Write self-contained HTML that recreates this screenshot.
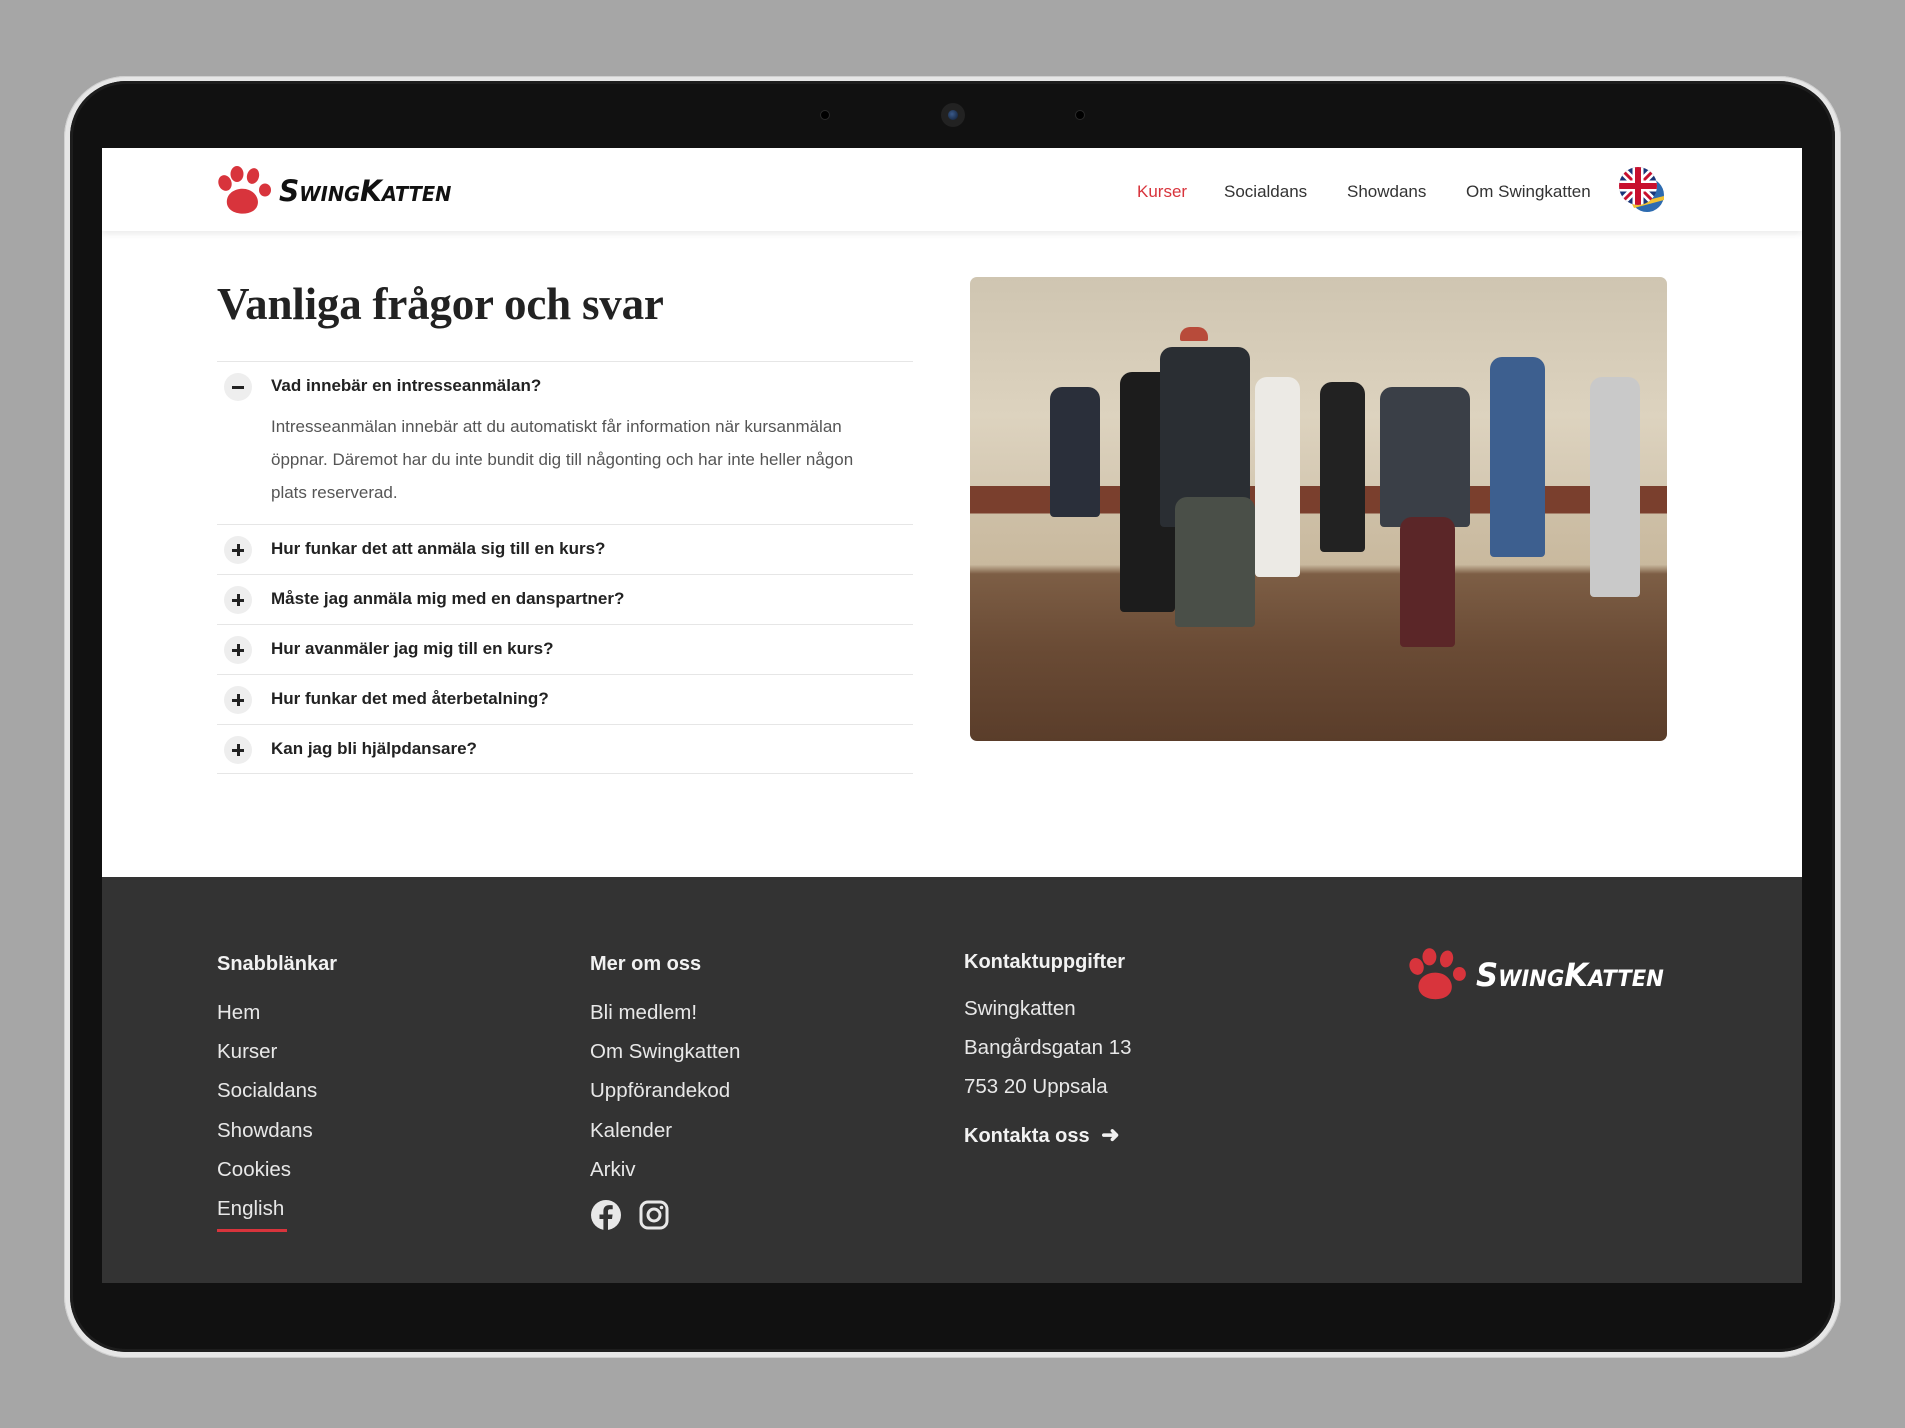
<!DOCTYPE html>
<html><head><meta charset="utf-8">
<style>
*{margin:0;padding:0;box-sizing:border-box}
body{width:1905px;height:1428px;background:#a6a6a6;position:relative;overflow:hidden;font-family:"Liberation Sans",sans-serif}
.outer{position:absolute;left:64px;top:76px;width:1777px;height:1282px;border-radius:62px;background:#e6e6e6;box-shadow:inset 0 0 0 1px #cfcfcf}
.bezel{position:absolute;left:70px;top:81px;width:1765px;height:1271px;border-radius:56px;background:#111;box-shadow:inset 0 0 0 3px #1d1d1d}
.screen{position:absolute;left:102px;top:148px;width:1700px;height:1135px;background:#fff;overflow:hidden}
.cam{position:absolute;left:941px;top:103px;width:24px;height:24px;border-radius:50%;background:#222}
.cam i{position:absolute;left:7px;top:7px;width:10px;height:10px;border-radius:50%;background:radial-gradient(circle at 40% 40%,#3a5a8a,#0d1a30)}
.dot{position:absolute;top:110px;width:10px;height:10px;border-radius:50%;background:#000;border:1px solid #2a2a2a}
.header{position:absolute;left:0;top:0;width:1700px;height:83px;background:#fff;box-shadow:0 3px 6px rgba(0,0,0,.08);z-index:2}
.logo{position:absolute;display:flex;align-items:center}
.logotxt{font-weight:900;font-style:italic;font-variant:small-caps;letter-spacing:0px;font-family:"DejaVu Sans","Liberation Sans",sans-serif;white-space:nowrap}
.nav{position:absolute;top:34px;font-size:17px;color:#333}
h1{position:absolute;left:115px;top:130px;font-family:"Liberation Serif",serif;font-weight:bold;font-size:45px;color:#222;letter-spacing:-0.2px}
.faq{position:absolute;left:115px;top:213px;width:696px}
.row{border-top:1px solid #e6e6e6;position:relative;height:50px}
.row .q{position:absolute;left:54px;top:14px;font-size:17px;font-weight:bold;color:#222}
.ic{position:absolute;left:7px;top:11px;width:28px;height:28px;border-radius:50%;background:#eee}
.ic:before{content:"";position:absolute;left:8px;top:12.5px;width:12px;height:3px;background:#222}
.ic.p:after{content:"";position:absolute;left:12.5px;top:8px;width:3px;height:12px;background:#222}
.ans{position:absolute;left:54px;top:48px;width:610px;font-size:17px;line-height:33px;color:#555}
.photo{position:absolute;left:868px;top:129px;width:697px;height:464px;border-radius:7px;overflow:hidden;background:linear-gradient(#cfc5b1 0%,#ddd3bf 30%,#d5c9b3 45%,#7a3f2d 45%,#7a3f2d 51%,#cdbfa6 51%,#c9b99e 62%,#7d5e45 64%,#6a4b35 80%,#5a3d2a 100%)}
.photo div{position:absolute;background:#222;border-radius:12px 12px 4px 4px}
.footer{position:absolute;left:0;top:729px;width:1700px;height:406px;background:#333;color:#eee}
.fh{position:absolute;font-size:20px;font-weight:bold;color:#f2f2f2}
.fl{position:absolute;font-size:20.5px;color:#e8e8e8}
</style></head><body>
<div class="outer"></div>
<div class="bezel"></div>
<div class="dot" style="left:820px"></div>
<div class="dot" style="left:1075px"></div>
<div class="cam"><i></i></div>
<div class="screen">
  <div class="header">
    <div class="logo" style="left:115px;top:18px">
      <svg width="56" height="50" viewBox="0 0 56 50"><g fill="#d8343c"><ellipse cx="8" cy="17" rx="6.5" ry="8" transform="rotate(-20 8 17)"/><ellipse cx="20" cy="8" rx="6.5" ry="8"/><ellipse cx="36" cy="10" rx="6" ry="8" transform="rotate(15 36 10)"/><ellipse cx="48" cy="24" rx="6" ry="6.5"/><path d="M10 38 C8 26 22 20 32 24 C42 28 44 40 36 45 C28 50 12 48 10 38Z"/></g></svg>
      <span class="logotxt" style="font-size:29px;color:#111;margin-left:6px;transform:scaleX(.97);transform-origin:left">SwingKatten</span>
    </div>
    <div class="nav" style="left:1035px;color:#d8343c">Kurser</div>
    <div class="nav" style="left:1122px">Socialdans</div>
    <div class="nav" style="left:1245px">Showdans</div>
    <div class="nav" style="left:1364px">Om Swingkatten</div>
    <svg style="position:absolute;left:1516px;top:18px" width="48" height="48" viewBox="0 0 48 48">
      <defs><clipPath id="c"><circle cx="20" cy="20" r="19"/></clipPath></defs>
      <circle cx="29" cy="29" r="17" fill="#2d6bb0"/><path d="M14 38 L46 30 L46 34 L16 42Z" fill="#f1c232"/>
      <g clip-path="url(#c)"><rect width="40" height="40" fill="#1a3578"/><path d="M0 0L40 40M40 0L0 40" stroke="#fff" stroke-width="8"/><path d="M0 0L40 40M40 0L0 40" stroke="#c8102e" stroke-width="3"/><path d="M20 0V40M0 20H40" stroke="#fff" stroke-width="11"/><path d="M20 0V40M0 20H40" stroke="#c8102e" stroke-width="6"/></g>
    </svg>
  </div>
  <h1>Vanliga frågor och svar</h1>
  <div class="faq">
    <div class="row" style="height:163px"><span class="ic"></span><div class="q">Vad innebär en intresseanmälan?</div>
      <div class="ans">Intresseanmälan innebär att du automatiskt får information när kursanmälan öppnar. Däremot har du inte bundit dig till någonting och har inte heller någon plats reserverad.</div></div>
    <div class="row"><span class="ic p"></span><div class="q">Hur funkar det att anmäla sig till en kurs?</div></div>
    <div class="row"><span class="ic p"></span><div class="q">Måste jag anmäla mig med en danspartner?</div></div>
    <div class="row"><span class="ic p"></span><div class="q">Hur avanmäler jag mig till en kurs?</div></div>
    <div class="row"><span class="ic p"></span><div class="q">Hur funkar det med återbetalning?</div></div>
    <div class="row" style="border-bottom:1px solid #e6e6e6"><span class="ic p"></span><div class="q">Kan jag bli hjälpdansare?</div></div>
  </div>
  <div class="photo">
    <div style="left:80px;top:110px;width:50px;height:130px;background:#2a2f3a"></div>
    <div style="left:150px;top:95px;width:55px;height:240px;background:#1c1c1c"></div>
    <div style="left:225px;top:110px;width:45px;height:180px;background:#e8e6e0"></div>
    <div style="left:285px;top:100px;width:45px;height:200px;background:#eceae5"></div>
    <div style="left:350px;top:105px;width:45px;height:170px;background:#222"></div>
    <div style="left:520px;top:80px;width:55px;height:200px;background:#3d5f8f"></div>
    <div style="left:620px;top:100px;width:50px;height:220px;background:#c9c9c9"></div>
    <div style="left:190px;top:70px;width:90px;height:180px;background:#2a2e33"></div>
    <div style="left:205px;top:220px;width:80px;height:130px;background:#4a4f48"></div>
    <div style="left:410px;top:110px;width:90px;height:140px;background:#3a3f47"></div>
    <div style="left:430px;top:240px;width:55px;height:130px;background:#5b2628"></div>
    <div style="left:210px;top:50px;width:28px;height:14px;background:#b84b3a;border-radius:10px 10px 2px 2px"></div>
  </div>
  <div class="footer">
    <div class="fh" style="left:115px;top:76px">Snabblänkar</div>
    <div class="fl" style="left:115px;top:124px">Hem</div>
    <div class="fl" style="left:115px;top:163px">Kurser</div>
    <div class="fl" style="left:115px;top:202px">Socialdans</div>
    <div class="fl" style="left:115px;top:242px">Showdans</div>
    <div class="fl" style="left:115px;top:281px">Cookies</div>
    <div class="fl" style="left:115px;top:320px">English</div>
    <div style="position:absolute;left:115px;top:352px;width:70px;height:3px;background:#d8343c"></div>
    <div class="fh" style="left:488px;top:76px">Mer om oss</div>
    <div class="fl" style="left:488px;top:124px">Bli medlem!</div>
    <div class="fl" style="left:488px;top:163px">Om Swingkatten</div>
    <div class="fl" style="left:488px;top:202px">Uppförandekod</div>
    <div class="fl" style="left:488px;top:242px">Kalender</div>
    <div class="fl" style="left:488px;top:281px">Arkiv</div>
    <svg style="position:absolute;left:488px;top:322px" width="32" height="32" viewBox="0 0 32 32"><circle cx="16" cy="16" r="15" fill="#e8e8e8"/><path d="M18 31V20h4l.6-4.5H18v-3c0-1.3.4-2.2 2.3-2.2h2.4V6.3c-.4-.1-1.8-.2-3.5-.2-3.5 0-5.8 2.1-5.8 6v3.4H9.5V20h3.9v11z" fill="#333"/></svg>
    <svg style="position:absolute;left:537px;top:323px" width="30" height="30" viewBox="0 0 30 30"><rect x="2" y="2" width="26" height="26" rx="7" fill="none" stroke="#e8e8e8" stroke-width="3"/><circle cx="15" cy="15" r="6" fill="none" stroke="#e8e8e8" stroke-width="3"/><circle cx="22.5" cy="7.5" r="1.8" fill="#e8e8e8"/></svg>
    <div class="fh" style="left:862px;top:74px">Kontaktuppgifter</div>
    <div class="fl" style="left:862px;top:120px">Swingkatten</div>
    <div class="fl" style="left:862px;top:159px">Bangårdsgatan 13</div>
    <div class="fl" style="left:862px;top:198px">753 20 Uppsala</div>
    <div class="fh" style="left:862px;top:245px">Kontakta oss <span style="font-size:22px;margin-left:6px">&#10140;</span></div>
    <div class="logo" style="left:1306px;top:71px">
      <svg width="60" height="54" viewBox="0 0 56 50"><g fill="#d8343c"><ellipse cx="8" cy="17" rx="6.5" ry="8" transform="rotate(-20 8 17)"/><ellipse cx="20" cy="8" rx="6.5" ry="8"/><ellipse cx="36" cy="10" rx="6" ry="8" transform="rotate(15 36 10)"/><ellipse cx="48" cy="24" rx="6" ry="6.5"/><path d="M10 38 C8 26 22 20 32 24 C42 28 44 40 36 45 C28 50 12 48 10 38Z"/></g></svg>
      <span class="logotxt" style="font-size:32px;color:#fff;margin-left:8px;transform:scaleX(.96);transform-origin:left">SwingKatten</span>
    </div>
  </div>
</div>
</body></html>
